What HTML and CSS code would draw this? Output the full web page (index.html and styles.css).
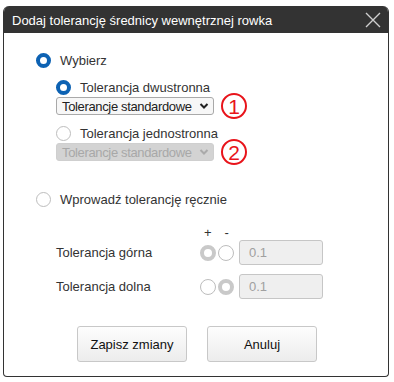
FILE: index.html
```html
<!DOCTYPE html>
<html lang="pl">
<head>
    <meta charset="UTF-8">
    <meta name="viewport" content="width=device-width, initial-scale=1.0">
    <title>Dodaj tolerancję</title>
    <link rel="stylesheet" href="styles.css">
</head>
<body>
    <div class="dialog">
        <div class="titlebar">
            <span class="title">Dodaj tolerancję średnicy wewnętrznej rowka</span>
            <svg class="close" width="16" height="16" viewBox="0 0 16 16">
                <path d="M1 1 L15 15 M15 1 L1 15" stroke="#cfcfcf" stroke-width="1.4" fill="none"/>
            </svg>
        </div>

        <div class="content">
            <div class="option top">
                <span class="radio checked"></span>
                <span>Wybierz</span>
            </div>

            <div class="sub">
                <div class="option">
                    <span class="radio checked"></span>
                    <span>Tolerancja dwustronna</span>
                </div>
                <div class="select-row">
                    <div class="select">
                        <span>Tolerancje standardowe</span>
                        <svg width="10" height="8" viewBox="0 0 10 8"><path d="M1.5 2 L5 5.5 L8.5 2" stroke="#222" stroke-width="2" fill="none"/></svg>
                    </div>
                    <span class="marker">1</span>
                </div>

                <div class="option second">
                    <span class="radio"></span>
                    <span>Tolerancja jednostronna</span>
                </div>
                <div class="select-row">
                    <div class="select disabled">
                        <span>Tolerancje standardowe</span>
                        <svg width="10" height="8" viewBox="0 0 10 8"><path d="M1.5 2 L5 5.5 L8.5 2" stroke="#aaa" stroke-width="2" fill="none"/></svg>
                    </div>
                    <span class="marker">2</span>
                </div>
            </div>

            <div class="option manual">
                <span class="radio"></span>
                <span>Wprowadź tolerancję ręcznie</span>
            </div>

            <div class="manual-grid">
                <div class="signs"><span>+</span><span>-</span></div>
                <div class="tol-row">
                    <span class="tol-label">Tolerancja górna</span>
                    <span class="radio dis-checked"></span>
                    <span class="radio"></span>
                    <div class="input">0.1</div>
                </div>
                <div class="tol-row">
                    <span class="tol-label">Tolerancja dolna</span>
                    <span class="radio"></span>
                    <span class="radio dis-checked"></span>
                    <div class="input">0.1</div>
                </div>
            </div>

            <div class="buttons">
                <button class="btn">Zapisz zmiany</button>
                <button class="btn">Anuluj</button>
            </div>
        </div>
    </div>
</body>
</html>
```

FILE: styles.css
```css
body {
    margin: 0;
    background: #fff;
    font-family: "Liberation Sans", Arial, sans-serif;
    color: #333;
}

.dialog {
    margin: 6px 0 0 3px;
    width: 386px;
    height: 371px;
    box-sizing: border-box;
    border: 1px solid #333;
    border-top: none;
    border-radius: 6px 6px 4px 4px;
    overflow: hidden;
}

.titlebar {
    height: 27px;
    background: #333;
    color: #fff;
    display: flex;
    align-items: center;
    justify-content: space-between;
    padding: 0 7px 0 8px;
    font-size: 13px;
}

.title {
    padding-top: 1px;
}

.content {
    padding: 19px 0 0 32px;
    font-size: 13px;
}

.option {
    display: flex;
    align-items: center;
    gap: 9px;
    height: 16px;
    white-space: nowrap;
}

.radio {
    width: 15px;
    height: 15px;
    box-sizing: border-box;
    border-radius: 50%;
    border: 1px solid #bdbdbd;
    background: #fff;
    flex: none;
}

.radio.checked {
    border: 4px solid #0d62b3;
}

.radio.dis-checked {
    border: 4px solid #c9c9c9;
}

.sub {
    margin: 11px 0 0 20px;
}

.select-row {
    display: flex;
    align-items: center;
    gap: 7px;
    margin-top: 2px;
}

.select {
    width: 158px;
    height: 18px;
    box-sizing: border-box;
    border: 1px solid #a9a9a9;
    border-radius: 3px;
    background: #f7f7f7;
    display: flex;
    align-items: center;
    justify-content: space-between;
    padding: 0 4px 0 5px;
    font-size: 13px;
    letter-spacing: -0.35px;
    white-space: nowrap;
    color: #222;
}

.select.disabled {
    background: #d3d3d3;
    border-color: #cfcfcf;
    color: #a8a8a8;
}

.marker {
    width: 26px;
    height: 26px;
    margin: -4px 0;
    box-sizing: border-box;
    border: 2px solid #e8141b;
    border-radius: 50%;
    color: #e8141b;
    font-size: 21px;
    line-height: 1;
    display: flex;
    align-items: center;
    justify-content: center;
}

.second {
    margin-top: 10px;
}

.manual {
    margin-top: 30px;
}

.manual-grid {
    margin: 20px 0 0 20px;
}

.signs {
    display: flex;
    gap: 13px;
    margin-left: 148px;
    height: 12px;
    line-height: 12px;
    font-size: 13px;
}

.tol-row {
    display: flex;
    align-items: center;
    margin-top: 1px;
    height: 25px;
}

.tol-row + .tol-row {
    margin-top: 9px;
}

.tol-label {
    width: 144px;
}

.tol-row .radio {
    width: 16px;
    height: 16px;
    margin-right: 2px;
}

.input {
    margin-left: 3px;
    width: 84px;
    height: 25px;
    box-sizing: border-box;
    border: 1px solid #c6c6c6;
    border-radius: 3px;
    background: #efefef;
    color: #a0a0a0;
    padding: 0 9px;
    line-height: 23px;
}

.buttons {
    display: flex;
    gap: 20px;
    margin: 27px 0 0 41px;
}

.btn {
    width: 110px;
    height: 36px;
    border: 1px solid #c8c8c8;
    border-radius: 3px;
    background: linear-gradient(#fdfdfd, #ececec);
    font-family: "Liberation Sans", Arial, sans-serif;
    font-size: 13px;
    color: #111;
}
```
